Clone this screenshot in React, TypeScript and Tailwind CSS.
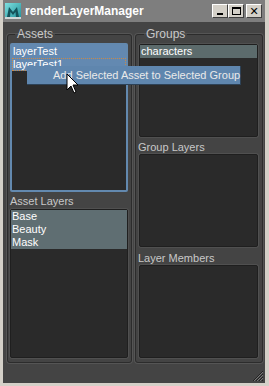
import React from "react";

const font = { fontFamily: "Tahoma, 'Liberation Sans', 'DejaVu Sans', sans-serif" };

function MayaIcon() {
  return (
    <svg width="16" height="16" viewBox="0 0 16 16" className="shrink-0">
      <defs>
        <linearGradient id="mg" x1="0" y1="0" x2="1" y2="1">
          <stop offset="0" stopColor="#7fe0e0" />
          <stop offset="1" stopColor="#1e8f98" />
        </linearGradient>
      </defs>
      <rect x="0" y="0" width="16" height="16" fill="url(#mg)" />
      <path d="M2 14 L4 4 L8 9 L12 4 L14 14 L11 14 L10.5 9 L8 12 L5.5 9 L5 14 Z" fill="#14545c" />
      <rect x="0" y="14" width="16" height="2" fill="#cfd8d8" />
    </svg>
  );
}

function TitleButton({ children }: { children: React.ReactNode }) {
  return (
    <div className="w-[16px] h-[14px] bg-[#d4d0c8] border-t border-l border-t-white border-l-white border-r border-b border-r-[#404040] border-b-[#404040] flex items-center justify-center">
      {children}
    </div>
  );
}

function ListBox({
  items = [],
  selected = [],
  selColor = "bg-[#5f6e72]",
  focused = false,
  className = "",
}: {
  items?: string[];
  selected?: number[];
  selColor?: string;
  focused?: boolean;
  className?: string;
}) {
  return (
    <div
      className={`rounded-[2px] bg-[#2a2a2a] ${
        focused
          ? "border-2 border-[#6389af]"
          : "border border-[#1f1f1f] shadow-[0_0_0_1px_#505050]"
      } ${className}`}
    >
      {items.map((it, i) => (
        <div
          key={it}
          className={`h-[13px] leading-[13px] px-[1px] text-[11px] text-white ${
            selected.includes(i) ? selColor : ""
          } ${focused && i === 1 ? "outline-1 outline-dotted outline-[#c88a4a] -outline-offset-1" : ""}`}
        >
          {it}
        </div>
      ))}
    </div>
  );
}

function Frame({
  title,
  className = "",
  children,
}: {
  title: string;
  className?: string;
  children: React.ReactNode;
}) {
  return (
    <fieldset
      className={`border border-[#2c2c2c] rounded-[3px] shadow-[0_0_0_1px_#555] flex flex-col ${className}`}
    >
      <legend className="ml-[5px] px-[2px] text-[12px] leading-[12px] text-[#c8c8c8]">{title}</legend>
      {children}
    </fieldset>
  );
}

export default function App() {
  return (
    <div
      className="w-[269px] h-[386px] bg-[#d4d0c8] pl-[3px] pr-[4px] pb-[3px] flex flex-col relative overflow-hidden"
      style={font}
    >
      <div className="h-[23px] bg-[#7e7e7e] flex items-center pl-[2px] pr-[3px]">
        <MayaIcon />
        <span
          className="ml-[4px] text-white font-bold text-[12px]"
          style={{ fontFamily: "'Liberation Sans', Arial, sans-serif" }}
        >
          renderLayerManager
        </span>
        <div className="ml-auto flex items-center">
          <TitleButton>
            <div className="w-[6px] h-[2px] bg-black mt-[6px] -ml-[1px]" />
          </TitleButton>
          <TitleButton>
            <div className="w-[9px] h-[8px] border border-black border-t-2" />
          </TitleButton>
          <div className="w-[2px]" />
          <TitleButton>
            <span className="text-[11px] leading-none font-bold text-black">✕</span>
          </TitleButton>
        </div>
      </div>

      <div className="flex-1 bg-[#444444] flex gap-[3px] pl-[4px] pr-[2px] pt-[6px] pb-[20px]">
        <Frame title="Assets" className="w-[126px] pl-[2px] pr-[3px] pb-[4px]">
          <ListBox
            items={["layerTest", "layerTest1"]}
            selected={[0, 1]}
            selColor="bg-[#6389b1]"
            focused
            className="h-[149px] mt-[3px]"
          />
          <div className="mt-[2px] text-[11px] leading-[14px] text-[#c8c8c8] h-[14px]">Asset Layers</div>
          <ListBox items={["Base", "Beauty", "Mask"]} selected={[0, 1, 2]} className="h-[149px] mt-[1px]" />
        </Frame>
        <Frame title="Groups" className="w-[129px] pl-[3px] pr-[4px] pb-[4px]">
          <ListBox items={["characters"]} selected={[0]} selColor="bg-[#5c6b6c]" className="h-[93px] mt-[4px]" />
          <div className="mt-[3px] text-[11px] leading-[14px] text-[#c8c8c8] h-[13px] -ml-[1px]">Group Layers</div>
          <ListBox className="h-[93px] mt-[1px]" />
          <div className="mt-[4px] text-[11px] leading-[14px] text-[#c8c8c8] h-[13px] -ml-[1px]">Layer Members</div>
          <ListBox className="h-[93px] mt-[1px]" />
        </Frame>
      </div>

      {/* resize grip */}
      <svg className="absolute right-[5px] bottom-[4px]" width="12" height="12" viewBox="0 0 12 12">
        <path d="M11 1 L1 11 M11 4 L4 11 M11 7 L7 11 M11 10 L10 11" stroke="#222" strokeWidth="1" />
        <path d="M11 2 L2 11 M11 5 L5 11 M11 8 L8 11" stroke="#777" strokeWidth="1" />
      </svg>

      {/* popup menu */}
      <div className="absolute left-[27px] top-[66px] w-[214px] h-[19px] bg-[#5f86ae] border-b border-r border-[#2d4257] text-[#eaeaea] text-[11px] leading-[18px] pl-[26px] whitespace-nowrap">
        Add Selected Asset to Selected Group
      </div>

      {/* cursor */}
      <svg className="absolute left-[66px] top-[73px]" width="14" height="22" viewBox="0 0 14 22">
        <path d="M1 1 L1 17 L5 13 L8 20 L10 19 L7 12 L12 12 Z" fill="white" stroke="black" strokeWidth="1" strokeLinejoin="miter" />
      </svg>
    </div>
  );
}
